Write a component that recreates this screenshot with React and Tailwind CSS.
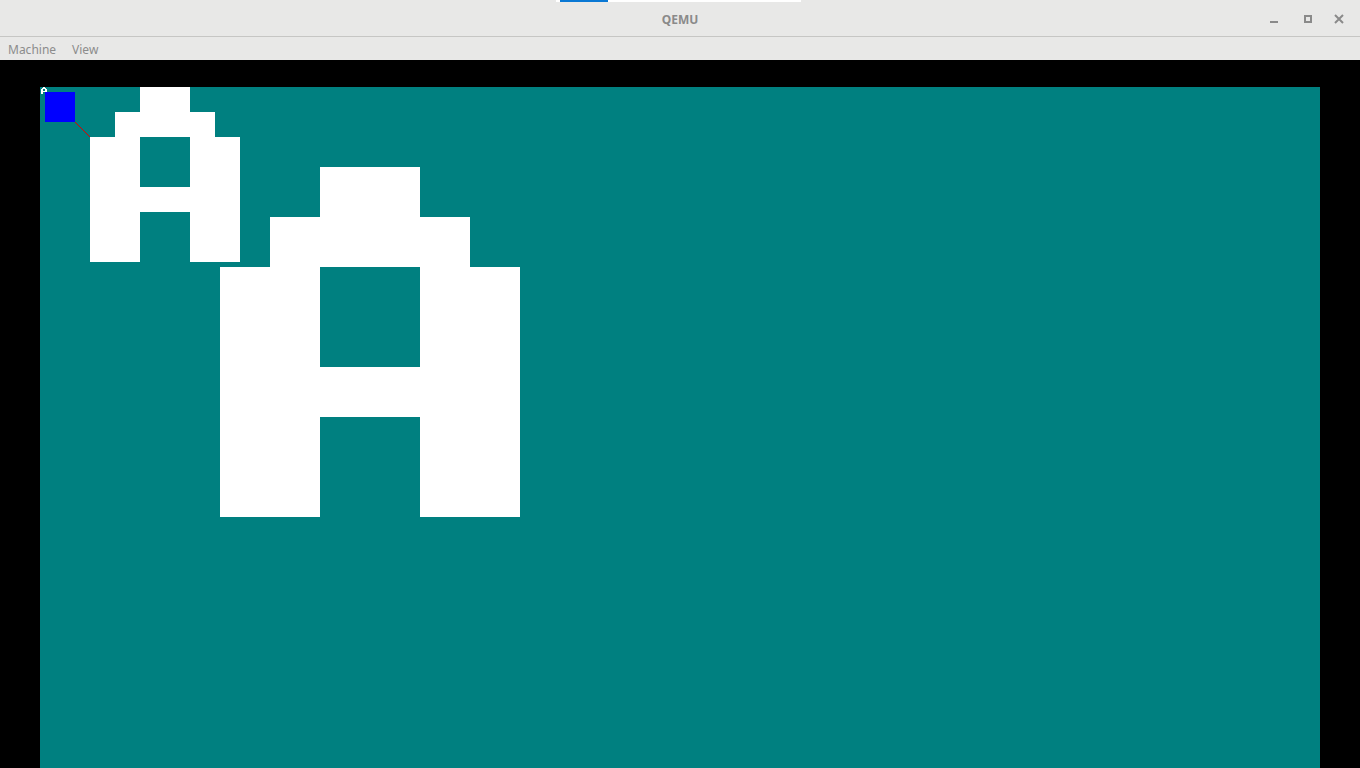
import React from "react";

const GLYPH_A = [
  "..##..",
  ".####.",
  "##..##",
  "##..##",
  "######",
  "##..##",
  "##..##",
];

function PixelA({ x, y, size }) {
  const rects = [];
  GLYPH_A.forEach((row, r) => {
    row.split("").forEach((c, i) => {
      if (c === "#") {
        rects.push(
          <rect key={`${r}-${i}`} x={x + i * size} y={y + r * size} width={size} height={size} fill="#ffffff" />
        );
      }
    });
  });
  return <g>{rects}</g>;
}

function WindowControls() {
  return (
    <div className="flex items-center pr-[14px]">
      {/* minimize */}
      <svg width="34" height="36" viewBox="0 0 34 36">
        <rect x="6" y="19" width="8" height="2" fill="#8a8a8a" />
      </svg>
      {/* maximize */}
      <svg width="34" height="36" viewBox="0 0 34 36">
        <rect x="7" y="14" width="6" height="6" fill="none" stroke="#8a8a8a" strokeWidth="2" />
      </svg>
      {/* close */}
      <svg width="14" height="36" viewBox="0 0 14 36">
        <path d="M3 13 L11 21 M11 13 L3 21" stroke="#8a8a8a" strokeWidth="2" />
      </svg>
    </div>
  );
}

export default function App() {
  const redDots = [];
  for (let i = 0; i < 15; i++) {
    redDots.push(<rect key={i} x={35 + i} y={35 + i} width="1" height="1" fill="#e00000" />);
  }

  return (
    <div className="h-screen w-[1360px] flex flex-col bg-black overflow-hidden font-['Noto_Sans',sans-serif]">
      {/* title bar */}
      <div className="h-[37px] shrink-0 flex flex-col bg-[#e8e8e7] border-b border-[#c6c6c4]">
        <div className="h-[2px] shrink-0 flex">
          <div className="w-[556px]" />
          <div className="w-[4px] bg-white" />
          <div className="w-[48px] bg-[#0a78d4]" />
          <div className="w-[193px] bg-white" />
        </div>
        <div className="flex-1 min-h-0 grid grid-cols-[1fr_auto_1fr] items-center">
          <div />
          <div className="text-[12px] font-bold text-[#8a8a8a] leading-none">QEMU</div>
          <div className="flex justify-end">
            <WindowControls />
          </div>
        </div>
      </div>

      {/* menu bar */}
      <div className="h-[23px] shrink-0 flex items-center gap-[16px] px-[8px] pt-[2px] bg-[#e8e8e7] text-[12px] text-[#8c8c8c]">
        <span>Machine</span>
        <span>View</span>
      </div>

      {/* guest display */}
      <div className="flex-1 flex pl-[40px] pt-[27px]">
        <div className="w-[1280px] h-full bg-[#008080]">
          <svg width="1280" height="681" viewBox="0 0 1280 681" shapeRendering="crispEdges">
            <PixelA x={1} y={0} size={1} />
            <rect x="5" y="5" width="30" height="30" fill="#0000ff" />
            {redDots}
            <PixelA x={50} y={0} size={25} />
            <PixelA x={180} y={80} size={50} />
          </svg>
        </div>
      </div>
    </div>
  );
}
